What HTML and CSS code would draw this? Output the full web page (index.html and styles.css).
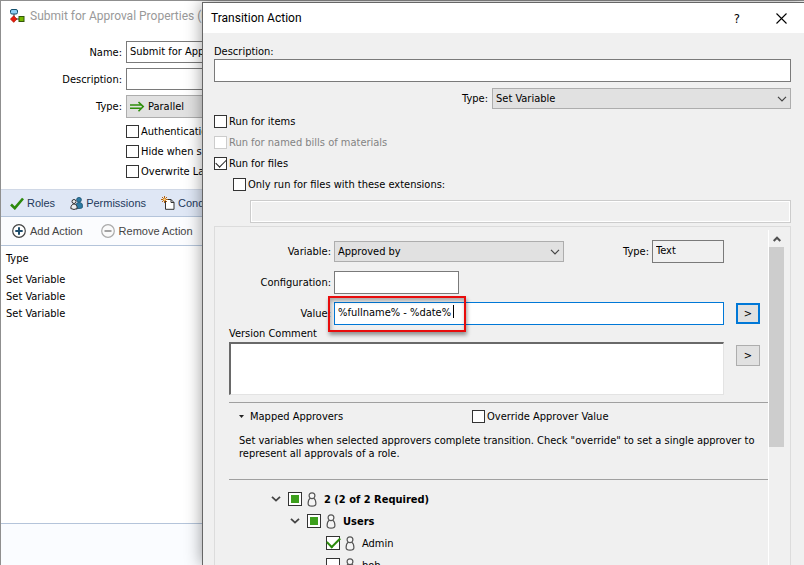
FILE: index.html
```html
<!DOCTYPE html>
<html lang="en">
<head>
  <meta charset="UTF-8">
  <meta name="viewport" content="width=device-width, initial-scale=1.0">
  <title>Transition Action</title>
  <link rel="stylesheet" href="styles.css">
</head>
<body>
  <!-- person outline used by the approver tree -->
  <svg width="0" height="0" class="symbols" aria-hidden="true">
    <symbol id="person" viewBox="0 0 10 15">
      <path d="M3.200 6.200C1.600 7.200 1.100 9.400 1.100 11.600C1.100 13.600 2.200 14.200 5 14.200C7.800 14.200 8.900 13.600 8.900 11.600C8.900 9.400 8.400 7.200 6.800 6.200Z" fill="#f4f4f4" stroke="#555" stroke-width="1.200"/>
      <circle cx="5" cy="3.700" r="2.900" fill="#f8f8f8" stroke="#555" stroke-width="1.200"/>
    </symbol>
    <symbol id="chevron" viewBox="0 0 10 6">
      <path d="M1 0.800L5 4.800L9 0.800" fill="none" stroke="currentColor" stroke-width="1.200"/>
    </symbol>
    <symbol id="expander" viewBox="0 0 10 6">
      <path d="M1 0.800L5 4.600L9 0.800" fill="none" stroke="currentColor" stroke-width="1.800"/>
    </symbol>
  </svg>

  <main class="properties">
    <header class="properties-title">
      <svg width="15" height="14" viewBox="0 0 15 14">
        <path d="M4 5V10H10" fill="none" stroke="#333" stroke-width="1"/>
        <rect x="0.500" y="0.500" width="7" height="4.500" rx="1.500" fill="#8fd0f5" stroke="#14506e"/>
        <path d="M3.700 6.800L7 10.100L3.700 13.400L0.400 10.100Z" fill="#e81c0c" stroke="#9c1206" stroke-width="0.600"/>
        <rect x="9" y="7.500" width="5" height="5" fill="#74b800" stroke="#33570a"/>
      </svg>
      <h1>Submit for Approval Properties (U</h1>
    </header>

    <form class="properties-form">
      <label for="name">Name:</label>
      <input id="name" class="field" type="text" value="Submit for Approval">
      <label for="prop-description">Description:</label>
      <input id="prop-description" class="field" type="text">
      <label for="prop-type">Type:</label>
      <div class="dropdown with-icon">
        <select id="prop-type"><option>Parallel</option></select>
        <svg class="dropdown-icon" width="15" height="11" viewBox="0 0 15 11">
          <path d="M0 4H11M0 7.200H11M8.500 1L13.200 5.600L8.500 10.200" fill="none" stroke="#2f8f0b" stroke-width="1.600"/>
        </svg>
      </div>
      <div class="options">
        <label class="check"><input type="checkbox">Authentication</label>
        <label class="check"><input type="checkbox">Hide when single</label>
        <label class="check"><input type="checkbox">Overwrite Latest</label>
      </div>
    </form>

    <nav class="tabs">
      <button type="button">
        <svg width="14" height="13" viewBox="0 0 14 13"><path d="M1 7.500L4.800 11.200L13 1.500" fill="none" stroke="#2c8a0c" stroke-width="2.600"/></svg>
        Roles
      </button>
      <button type="button">
        <svg width="13" height="13" viewBox="0 0 13 13">
          <circle cx="9" cy="2.800" r="2.400" fill="#2d7ba3" stroke="#174d6b" stroke-width="0.800"/>
          <path d="M6 12V8C6 4.700 12.400 4.700 12.400 8V10.500C12 11.500 9 11.500 8 11.500Z" fill="#2d7ba3" stroke="#174d6b" stroke-width="0.800"/>
          <circle cx="4" cy="4.500" r="2" fill="#eee" stroke="#333"/>
          <path d="M0.800 11.500C0.800 5.500 7.200 5.500 7.200 11.500Q4 13.500 0.800 11.500Z" fill="#eee" stroke="#333"/>
        </svg>
        Permissions
      </button>
      <button type="button">
        <svg width="14" height="14" viewBox="0 0 14 14">
          <path d="M4.500 3.500H10L13 6.500V13.300H4.500Z" fill="#fff" stroke="#333"/>
          <path d="M10 3.500V6.500H13" fill="none" stroke="#333"/>
          <path d="M3.500 0V7M0 3.500H7M1 1L6 6M6 1L1 6" stroke="#b8620e" stroke-width="1"/>
          <circle cx="3.500" cy="3.500" r="1.300" fill="#ffd27a"/>
        </svg>
        Conditions
      </button>
    </nav>

    <div class="toolbar">
      <button type="button">
        <svg width="14" height="14" viewBox="0 0 14 14"><circle cx="7" cy="7" r="6.300" fill="#fff" stroke="#444" stroke-width="1.200"/><path d="M7 3.300V10.700M3.300 7H10.700" stroke="#1d4c6c" stroke-width="2"/></svg>
        Add Action
      </button>
      <button type="button">
        <svg width="14" height="14" viewBox="0 0 14 14"><circle cx="7" cy="7" r="6.300" fill="#fafafa" stroke="#aaa" stroke-width="1.200"/><path d="M3.500 7H10.500" stroke="#999" stroke-width="1.800"/></svg>
        Remove Action
      </button>
    </div>

    <div class="actions">
      <table>
        <thead>
          <tr><th>Type</th></tr>
        </thead>
        <tbody>
          <tr><td>Set Variable</td></tr>
          <tr><td>Set Variable</td></tr>
          <tr><td>Set Variable</td></tr>
        </tbody>
      </table>
    </div>
    <footer class="properties-footer"></footer>
  </main>

  <section class="dialog" role="dialog" aria-labelledby="dialog-title">
    <header class="dialog-title">
      <h2 id="dialog-title">Transition Action</h2>
      <button type="button" class="help" aria-label="Help">?</button>
      <button type="button" class="close" aria-label="Close">
        <svg width="11" height="11" viewBox="0 0 11 11"><path d="M0.500 0.500L10.500 10.500M10.500 0.500L0.500 10.500" stroke="#000" stroke-width="1.100"/></svg>
      </button>
    </header>

    <form class="dialog-body">
      <label class="block-label" for="description">Description:</label>
      <input id="description" class="field tall" type="text">

      <div class="type-row">
        <label for="type">Type:</label>
        <div class="dropdown">
          <select id="type"><option>Set Variable</option></select>
          <svg class="dropdown-arrow" width="10" height="6"><use href="#chevron"/></svg>
        </div>
      </div>

      <div class="run-options">
        <label class="check"><input type="checkbox">Run for items</label>
        <label class="check disabled"><input type="checkbox" disabled>Run for named bills of materials</label>
        <label class="check"><input type="checkbox" checked>Run for files</label>
        <label class="check nested"><input type="checkbox" id="limit">Only run for files with these extensions:</label>
      </div>
      <input class="field tall extensions" type="text" aria-label="Extensions" disabled>

      <div class="group">
        <div class="group-content">
          <div class="variable-form">
            <label for="variable">Variable:</label>
            <div class="variable-row">
              <div class="dropdown">
                <select id="variable"><option>Approved by</option></select>
                <svg class="dropdown-arrow" width="10" height="6"><use href="#chevron"/></svg>
              </div>
              <label for="variable-type">Type:</label>
              <input id="variable-type" class="field tall" type="text" value="Text" readonly>
            </div>
            <label for="configuration">Configuration:</label>
            <input id="configuration" class="field tall configuration" type="text">
            <label for="value">Value:</label>
            <div class="value-row">
              <input id="value" class="field tall focused" type="text" value="%fullname% - %date%">
              <button type="button" class="more default" aria-label="Insert value">&gt;</button>
              <div class="highlight"><i class="caret"></i></div>
            </div>
          </div>

          <label class="comment-label" for="comment">Version Comment</label>
          <div class="comment-row">
            <textarea id="comment"></textarea>
            <button type="button" class="more" aria-label="Insert comment">&gt;</button>
          </div>

          <div class="mapped">
            <div class="mapped-head">
              <button type="button" class="section-toggle">
                <svg width="5" height="3" viewBox="0 0 5 3"><path d="M0 0H5L2.500 3Z" fill="#222"/></svg>
                Mapped Approvers
              </button>
              <label class="check"><input type="checkbox">Override Approver Value</label>
            </div>
            <p>Set variables when selected approvers complete transition. Check "override" to set a single approver to represent all approvals of a role.</p>
          </div>

          <ul class="tree">
            <li>
              <div class="node">
                <svg class="expander" width="10" height="6"><use href="#expander"/></svg>
                <input id="group-2" class="partial" type="checkbox">
                <svg width="10" height="15"><use href="#person"/></svg>
                <label for="group-2"><b>2 (2 of 2 Required)</b></label>
              </div>
              <ul>
                <li>
                  <div class="node">
                    <svg class="expander" width="10" height="6"><use href="#expander"/></svg>
                    <input id="users" class="partial" type="checkbox">
                    <svg width="10" height="15"><use href="#person"/></svg>
                    <label for="users"><b>Users</b></label>
                  </div>
                  <ul>
                    <li>
                      <div class="node leaf">
                        <input id="admin" type="checkbox" checked>
                        <svg width="10" height="15"><use href="#person"/></svg>
                        <label for="admin">Admin</label>
                      </div>
                    </li>
                    <li>
                      <div class="node leaf">
                        <input id="bob" type="checkbox">
                        <svg width="10" height="15"><use href="#person"/></svg>
                        <label for="bob">bob</label>
                      </div>
                    </li>
                  </ul>
                </li>
              </ul>
            </li>
          </ul>
        </div>

        <div class="scrollbar">
          <svg width="8" height="6" viewBox="0 0 8 6"><path d="M0.700 5L4 1.700L7.300 5" fill="none" stroke="#505050" stroke-width="2"/></svg>
          <div class="thumb"></div>
        </div>
      </div>
    </form>
  </section>
</body>
</html>
```
FILE: styles.css
```css
* {
  box-sizing: border-box;
}

body {
  margin: 0;
  height: 100vh;
  overflow: hidden;
  position: relative;
  background: #8f8f8f;
  color: #000;
  font-family: "DejaVu Sans Condensed", Tahoma, sans-serif;
  font-size: 11px;
  line-height: 13px;
}

h1, h2, p, ul {
  margin: 0;
  padding: 0;
  font-weight: normal;
}

ul {
  list-style: none;
}

svg {
  display: block;
  flex: none;
}

button, input, select, textarea {
  font: inherit;
  color: inherit;
  margin: 0;
  border-radius: 0;
}

.symbols {
  position: absolute;
}

/* shared controls */

.field {
  width: 100%;
  height: 22px;
  padding: 0 3px 2px;
  background: #fff;
  border: 1px solid #7a7a7a;
  outline: none;
}

.field.tall {
  height: 23px;
}

.field:disabled {
  background: #f0f0f0;
  border-color: #ccc;
  box-shadow: inset 0 0 0 1px #fff;
}

.field.focused {
  border-color: #0078d7;
}

.dropdown {
  display: grid;
  align-items: center;
}

.dropdown select {
  grid-area: 1 / 1;
  width: 100%;
  height: 21px;
  padding: 0 3px;
  appearance: none;
  background: #e1e1e1;
  border: 1px solid #adadad;
}

.dropdown-arrow {
  grid-area: 1 / 1;
  justify-self: end;
  margin-right: 4px;
  color: #444;
  pointer-events: none;
}

.dropdown-icon {
  grid-area: 1 / 1;
  margin-left: 4px;
  pointer-events: none;
}

.dropdown.with-icon select {
  height: 23px;
  padding-left: 21px;
}

.check {
  display: flex;
  align-items: center;
  gap: 2px;
  white-space: nowrap;
}

.check.disabled {
  color: #838383;
}

input[type="checkbox"] {
  appearance: none;
  flex: none;
  display: grid;
  place-items: center;
  width: 13px;
  height: 13px;
  background: #fff;
  border: 1px solid #333;
}

input[type="checkbox"]:disabled {
  border-color: #ccc;
}

.check input:checked::before {
  content: "";
  width: 9px;
  height: 5px;
  margin-bottom: 3px;
  border: solid #222;
  border-width: 0 0 1px 1px;
  transform: rotate(-45deg);
}

/* properties window */

.properties {
  display: flex;
  flex-direction: column;
  height: 100%;
  padding-top: 1px;
  background: #fff;
  border-top: 1px solid #8f8f8f;
  border-left: 1px solid #8f8f8f;
}

.properties-title {
  display: flex;
  align-items: center;
  gap: 5px;
  height: 27px;
  padding-left: 9px;
  color: #999;
}

.properties-title h1 {
  font-family: Roboto, "Segoe UI", sans-serif;
  font-size: 12px;
  line-height: 16px;
}

.properties-form {
  display: grid;
  grid-template-columns: 121px 1fr;
  column-gap: 4px;
  row-gap: 5px;
  align-items: center;
  padding: 12px 12px 11px 0;
}

.properties-form > label {
  text-align: right;
}

.options {
  grid-column: 2;
  display: flex;
  flex-direction: column;
  gap: 7px;
  padding-top: 2px;
}

.tabs, .toolbar {
  display: flex;
  align-items: center;
  height: 28px;
  padding-left: 9px;
  font-family: "Liberation Sans", Arial, sans-serif;
  font-size: 11px;
}

.tabs {
  gap: 15px;
  background: #dfe7f5;
  border-top: 1px solid #d0d8e6;
  border-bottom: 1px solid #b4c4da;
  color: #1e395b;
}

.toolbar {
  gap: 18px;
  height: 29px;
  padding-left: 11px;
  background: #fbfcfe;
  border-bottom: 1px solid #b4c4da;
  color: #444;
}

.tabs button, .toolbar button {
  display: flex;
  align-items: center;
  gap: 3px;
  padding: 0;
  background: none;
  border: 0;
}

.toolbar button {
  gap: 4px;
}

.actions {
  flex: 1;
  padding: 4px 5px;
}

.actions table {
  border-collapse: collapse;
}

.actions th, .actions td {
  height: 17px;
  padding: 0;
  font-weight: normal;
  text-align: left;
}

.actions th {
  height: 21px;
  padding-bottom: 4px;
}

.properties-footer {
  height: 42px;
  background: #fafcff;
  border-top: 1px solid #b4c4da;
}

/* transition action dialog */

.dialog {
  position: absolute;
  top: 2px;
  right: 0;
  bottom: 0;
  left: 202px;
  display: flex;
  flex-direction: column;
  overflow: hidden;
  background: #f0f0f0;
  border-top: 1px solid #666;
  border-left: 1px solid #666;
  box-shadow: 0 0 16px rgba(0, 0, 0, 0.4);
}

.dialog-title {
  display: flex;
  flex: none;
  align-items: center;
  height: 30px;
  padding: 0 17px 0 8px;
  background: #fff;
}

.dialog-title h2 {
  flex: 1;
  font-family: Roboto, "Segoe UI", sans-serif;
  font-size: 12px;
  line-height: 16px;
}

.dialog-title button {
  padding: 0;
  background: none;
  border: 0;
}

.dialog-title .help {
  margin-right: 36px;
  font-size: 13px;
}

.dialog-body {
  display: flex;
  flex: 1;
  flex-direction: column;
  min-height: 0;
  padding: 12px 13px 0 11px;
}

.block-label {
  padding-bottom: 1px;
}

.type-row {
  display: flex;
  align-items: center;
  justify-content: flex-end;
  gap: 4px;
  padding: 6px 0;
}

.type-row .dropdown {
  width: 299px;
}

.run-options {
  display: flex;
  flex-direction: column;
  gap: 8px;
}

.check.nested {
  padding-left: 19px;
}

.field.extensions {
  align-self: flex-end;
  width: calc(100% - 36px);
  margin: 9px 0 3px;
}

.dialog-body > .field {
  flex: none;
}

.group {
  display: flex;
  flex: 1;
  min-height: 0;
  padding: 3px 6px 0 14px;
  border: 1px solid #dcdcdc;
  border-bottom: 0;
}

.group-content {
  flex: 1;
  min-width: 0;
  padding-top: 10px;
}

.variable-form {
  display: grid;
  grid-template-columns: 102px 1fr;
  column-gap: 3px;
  row-gap: 8px;
  align-items: center;
  padding-right: 8px;
}

.variable-form > label {
  text-align: right;
}

.variable-row {
  display: flex;
  align-items: center;
  gap: 3px;
  padding-right: 36px;
}

.variable-row .dropdown {
  flex: 1;
  margin-right: 56px;
}

.variable-row .field {
  width: 72px;
  background: #f0f0f0;
}

.field.configuration {
  width: 125px;
}

.value-row {
  position: relative;
  display: flex;
  align-items: center;
  gap: 12px;
}

.more {
  flex: none;
  width: 24px;
  height: 21px;
  padding: 0;
  background: #e1e1e1;
  border: 1px solid #adadad;
}

.more.default {
  border: 2px solid #0078d7;
}

/* red marker drawn over the value */
.highlight {
  position: absolute;
  top: -6px;
  left: -6px;
  width: 138px;
  height: 36px;
  padding: 7px 10px;
  border: 2px solid #e80c0c;
  box-shadow: 1px 3px 4px rgba(0, 0, 0, 0.4), inset 1px 3px 4px rgba(0, 0, 0, 0.3);
  pointer-events: none;
}

.caret {
  display: block;
  width: 1px;
  height: 13px;
  margin-left: auto;
  background: #000;
}

.comment-label {
  display: block;
  padding: 2px 0;
}

.comment-row {
  display: flex;
  align-items: flex-start;
  gap: 12px;
  padding-right: 8px;
}

.comment-row textarea {
  flex: 1;
  height: 53px;
  resize: none;
  border: 1px solid #e3e3e3;
  border-top: 2px solid #696969;
  border-left: 2px solid #696969;
}

.comment-row .more {
  margin-top: 3px;
}

.mapped {
  margin-top: 7px;
  padding: 7px 8px 19px 10px;
  border-top: 1px solid #a0a0a0;
  border-bottom: 1px solid #a0a0a0;
}

.mapped-head {
  display: flex;
  align-items: center;
  gap: 129px;
  padding-bottom: 11px;
}

.section-toggle {
  display: flex;
  align-items: center;
  gap: 6px;
  padding: 0;
  background: none;
  border: 0;
}

.tree {
  padding: 8px 0 0 42px;
}

.tree ul {
  padding-left: 19px;
}

.node {
  display: flex;
  align-items: center;
  gap: 5px;
  height: 22px;
}

.node.leaf {
  padding-left: 17px;
}

.node label {
  padding-left: 2px;
}

.node .expander {
  margin-right: 2px;
  color: #444;
}

.node input[type="checkbox"] {
  width: 14px;
  height: 14px;
}

.node input.partial::before {
  content: "";
  width: 8px;
  height: 8px;
  background: #3c9f1c;
}

.node input:checked::before {
  content: "";
  width: 11px;
  height: 6px;
  margin-bottom: 4px;
  border: solid #2c8a0c;
  border-width: 0 0 2px 2px;
  transform: rotate(-45deg);
}

.scrollbar {
  display: flex;
  flex: none;
  flex-direction: column;
  align-items: center;
  width: 16px;
  padding-top: 6px;
  border-left: 1px solid #fff;
}

.thumb {
  width: 15px;
  height: 200px;
  margin-top: 5px;
  background: #cdcdcd;
}
```
